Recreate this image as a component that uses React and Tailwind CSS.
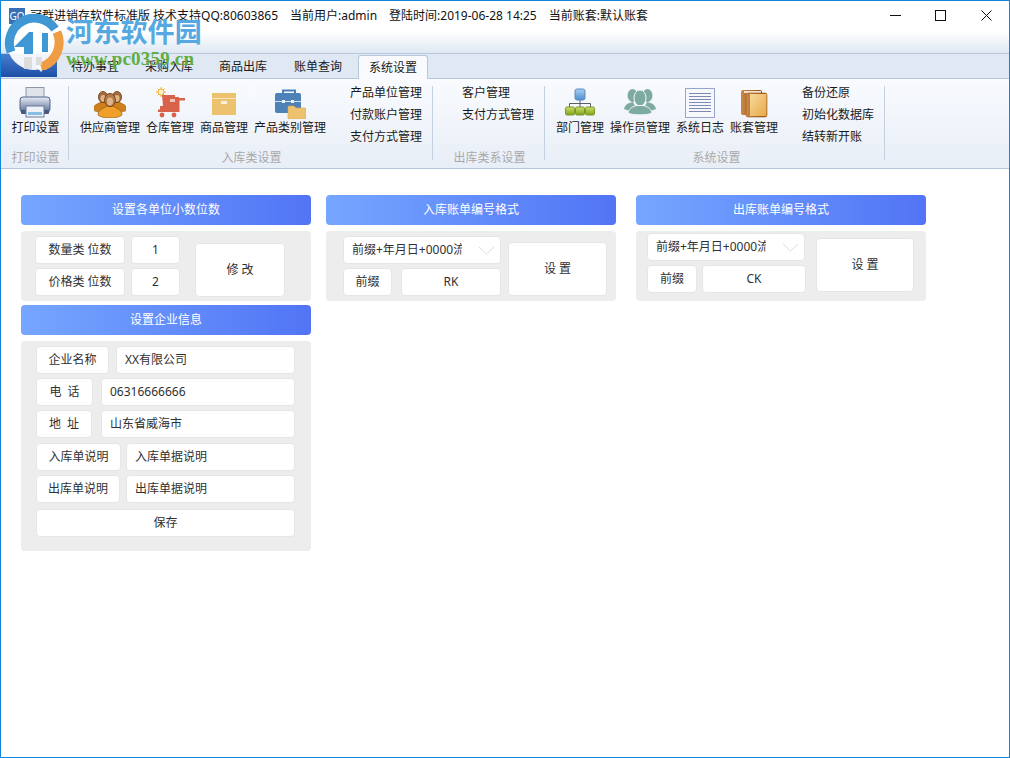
import React from "react";

function Box({ className = "", children }) {
  return (
    <div className={"flex items-center bg-white rounded-[4px] border border-[#e6e6e6] h-[28px] shrink-0 text-[12px] text-[#303133] " + className}>
      {children}
    </div>
  );
}
function Header({ children }) {
  return (
    <div className="h-[30px] flex items-center justify-center rounded-[4px] bg-gradient-to-r from-[#76a6ff] to-[#5274f5] text-white text-[12px]">
      {children}
    </div>
  );
}
function Panel({ className = "", children }) {
  return <div className={"bg-[#ededed] rounded-[4px] mt-[6px] " + className}>{children}</div>;
}

function Chevron() {
  return (
    <svg width="17" height="9" viewBox="0 0 17 9" className="shrink-0">
      <path d="M1 1 L8.5 8 L16 1" fill="none" stroke="#dcdcdc" strokeWidth="1" />
    </svg>
  );
}

function SelectBox({ w }) {
  return (
    <Box className={"pl-[8px] " + w}>
      <div className="w-[110px] overflow-hidden whitespace-nowrap">前缀+年月日+0000流水号</div>
      <div className="ml-[16px]"><Chevron /></div>
    </Box>
  );
}

function Printer() {
  return (
    <svg width="32" height="31" viewBox="0 0 32 31">
      <defs>
        <linearGradient id="pb" x1="0" y1="0" x2="0" y2="1"><stop offset="0" stopColor="#e8edf5" /><stop offset="1" stopColor="#5c6f96" /></linearGradient>
      </defs>
      <rect x="7" y="0.5" width="18" height="13" fill="#dfe3ea" stroke="#8d97a8" />
      <rect x="1" y="10" width="30" height="15" rx="3" fill="url(#pb)" stroke="#56678b" />
      <rect x="2" y="23" width="28" height="4" rx="1" fill="#46587d" />
      <rect x="7" y="19" width="18" height="11" fill="#eef2f7" stroke="#6a7b9b" />
      <rect x="9" y="25" width="14" height="3" fill="#86bce8" />
    </svg>
  );
}
function Person({ x, y, s = 1, fill, head }) {
  return (
    <g transform={`translate(${x} ${y}) scale(${s})`}>
      <path d="M-12 15 C-12 9 -5 8 -3 6 L3 6 C5 8 12 9 12 15 C8 19 -8 19 -12 15Z" fill={fill} stroke="#8a5212" strokeWidth="0.6" />
      <ellipse cx="0" cy="0" rx="5.4" ry="6.6" fill={head} stroke="#6d3f14" strokeWidth="0.9" />
      <ellipse cx="0" cy="1.5" rx="3" ry="4" fill="#e0b48a" />
    </g>
  );
}
function Supplier() {
  return (
    <svg width="32" height="28" viewBox="0 0 32 28">
      <Person x={9} y={7} s={0.85} fill="#cf7f1c" head="#a56a3c" />
      <Person x={23} y={7} s={0.85} fill="#cf7f1c" head="#a56a3c" />
      <Person x={16} y={10} s={1} fill="#f0a02a" head="#b67a48" />
    </svg>
  );
}
function Cart() {
  return (
    <svg width="30" height="32" viewBox="0 0 30 32">
      <g stroke="#f2b23a" strokeWidth="1">
        <path d="M6 1V11M1 6H11M2.5 2.5L9.5 9.5M9.5 2.5L2.5 9.5" />
      </g>
      <circle cx="6" cy="6" r="3" fill="#fff3c6" stroke="#f0b040" />
      <path d="M7 9H20V11H24V24H5V20H8Z" fill="#d9634a" />
      <rect x="15" y="13" width="5" height="3" fill="#f0c4b8" />
      <path d="M22 12H30V14.5H24.5V26H3V23.5H22Z" fill="#d9634a" />
      <circle cx="7" cy="29" r="2.4" fill="#d9634a" />
      <circle cx="19" cy="29" r="2.4" fill="#d9634a" />
    </svg>
  );
}
function BoxIcon() {
  return (
    <svg width="24" height="22" viewBox="0 0 24 22" className="mb-[3px]">
      <rect x="0" y="0" width="24" height="22" fill="#edc26f" />
      <rect x="0" y="5" width="24" height="1" fill="#f8e5bf" />
      <rect x="9" y="8" width="6" height="3" fill="#fbf1dc" />
    </svg>
  );
}
function Briefcase() {
  return (
    <svg width="32" height="31" viewBox="0 0 32 31" className="-mb-[1px]">
      <path d="M9 5V2.5H21V5" fill="none" stroke="#4a80b5" strokeWidth="2" />
      <rect x="1" y="5" width="26" height="20" rx="2" fill="#4d82b8" />
      <rect x="1" y="13" width="26" height="1" fill="#cfe0f0" />
      <rect x="8" y="12" width="3" height="3" fill="#e8f0f8" />
      <rect x="17" y="12" width="3" height="3" fill="#e8f0f8" />
      <path d="M14 30V19a1 1 0 0 1 1-1h5l2 2h9a1 1 0 0 1 1 1v9a1 1 0 0 1-1 1H15a1 1 0 0 1-1-1z" fill="#edc26f" stroke="#d9a850" strokeWidth="0.6" />
    </svg>
  );
}
function Org() {
  return (
    <svg width="30" height="28" viewBox="0 0 30 28" className="mb-[2px]">
      <defs>
        <linearGradient id="ob" x1="0" y1="0" x2="0" y2="1"><stop offset="0" stopColor="#a9d0f2" /><stop offset="1" stopColor="#4d8fd0" /></linearGradient>
        <linearGradient id="og" x1="0" y1="0" x2="0" y2="1"><stop offset="0" stopColor="#cde06a" /><stop offset="1" stopColor="#7ca31c" /></linearGradient>
      </defs>
      <rect x="10" y="1" width="10" height="11" rx="2" fill="url(#ob)" stroke="#5a8cbf" />
      <path d="M15 12V15M4.5 19V15.5H25.5V19M15 15V19" fill="none" stroke="#5b5f66" />
      <rect x="0.5" y="19" width="9" height="8" rx="1.5" fill="url(#og)" stroke="#7b9728" />
      <rect x="10.5" y="19" width="9" height="8" rx="1.5" fill="url(#og)" stroke="#7b9728" />
      <rect x="20.5" y="19" width="9" height="8" rx="1.5" fill="url(#og)" stroke="#7b9728" />
    </svg>
  );
}
function Team() {
  return (
    <svg width="32" height="28" viewBox="0 0 32 28" fill="#7eaba0" className="mb-[2px]">
      <ellipse cx="8.5" cy="7.5" rx="5" ry="6.5" />
      <ellipse cx="23.5" cy="7.5" rx="5" ry="6.5" />
      <path d="M0 21C1 16 5 15 9 14L12 20 8 24Z" />
      <path d="M32 21C31 16 27 15 23 14L20 20 24 24Z" />
      <ellipse cx="16" cy="10" rx="6" ry="8" stroke="#f3f6fb" strokeWidth="1" />
      <path d="M4 25C5 20 10 18 13 17.5H19C22 18 27 20 28 25 24 27.5 8 27.5 4 25Z" stroke="#f3f6fb" strokeWidth="1" />
    </svg>
  );
}
function DocLines() {
  return (
    <svg width="30" height="30" viewBox="0 0 30 30">
      <rect x="0.5" y="0.5" width="29" height="29" fill="#f7f8fc" stroke="#97a5c9" />
      <g stroke="#7a89b5">
        <path d="M4 5.5H26M4 8.5H26M4 11.5H26M4 14.5H26M4 17.5H26M4 20.5H26M4 23.5H26" />
      </g>
    </svg>
  );
}
function Books() {
  return (
    <svg width="28" height="29" viewBox="0 0 28 29">
      <defs>
        <linearGradient id="bk" x1="0" y1="0" x2="1" y2="1"><stop offset="0" stopColor="#f6d99a" /><stop offset="1" stopColor="#e8a94a" /></linearGradient>
        <linearGradient id="bs" x1="0" y1="0" x2="1" y2="0"><stop offset="0" stopColor="#c98747" /><stop offset="1" stopColor="#8f4e18" /></linearGradient>
      </defs>
      <rect x="1" y="1" width="21" height="25" rx="2" fill="url(#bs)" />
      <rect x="4" y="2" width="17" height="2" fill="#f4e3cb" />
      <rect x="6" y="4" width="21" height="24" rx="2" fill="url(#bs)" stroke="#a9601f" strokeWidth="0.6" />
      <rect x="10" y="5" width="16.5" height="22" fill="url(#bk)" />
    </svg>
  );
}

function Big({ icon, label }) {
  return (
    <div className="flex flex-col items-center shrink-0">
      <div className="h-[39px] flex items-end justify-center">{icon}</div>
      <div className="mt-[2px] leading-[16px] text-[12px] whitespace-nowrap text-[#1a1a1a]">{label}</div>
    </div>
  );
}
function Small({ items, className = "" }) {
  return (
    <div className={"flex flex-col gap-[6px] pt-[6px] text-[12px] leading-[16px] text-[#1a1a1a] whitespace-nowrap " + className}>
      {items.map((t) => <div key={t}>{t}</div>)}
    </div>
  );
}
function Group({ w, label, children, className = "", labelClass = "" }) {
  return (
    <>
      <div className={"flex flex-col shrink-0 " + w}>
        <div className={"flex gap-[6px] h-[64px] " + className}>{children}</div>
        <div className={"mt-[7px] text-center text-[12px] leading-[16px] text-[#a9a9a9] " + labelClass}>{label}</div>
      </div>
      <div className="w-px h-[74px] mt-[7px] bg-[#c3d0e0] shrink-0" />
    </>
  );
}

function Watermark() {
  return (
    <div className="absolute left-[3px] top-[13px] w-[210px] h-[60px] pointer-events-none">
      <svg width="60" height="56" viewBox="0 0 60 56" className="absolute left-0 top-0">
        <circle cx="30" cy="29" r="27" fill="#fff" opacity="0.93" />
        <path d="M7 38 A25 25 0 0 1 51 15" fill="none" stroke="#3f97d3" strokeWidth="9" />
        <path d="M53 18 A26 26 0 0 1 37 53" fill="none" stroke="#ee9d44" strokeWidth="9" />
        <path d="M10 33 L25 18 L29 18 L29 40 L20 40 L20 33Z" fill="#3f97d3" />
        <path d="M29 12 L41 12 L41 17 L37 17 L37 38 L31 38 Z" fill="#fff" />
        <path d="M38 19H44V38H38Z" fill="#3f97d3" />
        <path d="M20 43 H28 V55 H20Z M32 43 H38 V51 H32Z" fill="#d9d9d9" opacity="0.9" />
      </svg>
      <div className="absolute left-[62px] top-[0px] text-[27px] leading-[34px] font-bold tracking-[0.2px] text-[#57a8e0] whitespace-nowrap [font-family:'Noto_Sans_CJK_SC',sans-serif]">河东软件园</div>
      <div className="absolute left-[62px] top-[34px] text-[19px] leading-[22px] font-bold tracking-[0.2px] text-[#5fae42] whitespace-nowrap [font-family:'Liberation_Serif',serif]">www.pc0359.cn</div>
    </div>
  );
}

export default function App() {
  return (
    <div className="relative w-[1010px] h-[758px] overflow-hidden border border-[#1484d8] bg-white flex flex-col [font-family:'Noto_Sans','Noto_Sans_CJK_SC',sans-serif]">
      {/* title bar */}
      <div className="h-[53px] shrink-0 bg-[linear-gradient(#ffffff_0,#ffffff_58%,#dfe8f3_100%)] border-b border-[#b9c8dc]">
        <div className="flex items-center h-[29px] pl-[8px] text-[12px] text-[#111] whitespace-nowrap">
          <div className="w-[16px] h-[16px] mr-[5px] bg-[#3a6fb5] text-white text-[10px] leading-[16px] text-center shrink-0">GO</div>
          <span>冠群进销存软件标准版 技术支持QQ:80603865</span>
          <span className="ml-[12px]">当前用户:admin</span>
          <span className="ml-[12px]">登陆时间:2019-06-28 14:25</span>
          <span className="ml-[12px]">当前账套:默认账套</span>
          <div className="ml-auto flex items-center">
            <svg width="11" height="11" viewBox="0 0 11 11" className="mr-[34px]"><path d="M0 5.5H11" stroke="#111" /></svg>
            <svg width="11" height="11" viewBox="0 0 11 11" className="mr-[35px]"><rect x="0.5" y="0.5" width="10" height="10" fill="none" stroke="#111" /></svg>
            <svg width="11" height="11" viewBox="0 0 11 11" className="mr-[17px]"><path d="M0.5 0.5L10.5 10.5M10.5 0.5L0.5 10.5" stroke="#111" /></svg>
          </div>
        </div>
      </div>
      {/* tabs */}
      <div className="h-[25px] shrink-0 bg-[#dfe8f3] border-b border-[#b5c7de] flex items-end text-[12px] text-[#1a1a1a] whitespace-nowrap">
        <div className="w-[56px] h-[23px] mb-px bg-gradient-to-b from-[#4a7fd0] to-[#1c4ea6] flex items-end pl-[35px] shrink-0">
          <svg width="10" height="6" viewBox="0 0 10 6" className="mb-[5px]"><path d="M0 0H10L5 6Z" fill="#e8eef8" /></svg>
        </div>
        <div className="flex items-center h-[23px] ml-[14px] gap-[26px]">
          <span>待办事宜</span><span>采购入库</span><span>商品出库</span><span className="ml-px">账单查询</span>
        </div>
        <div className="ml-[16px] w-[70px] h-[24px] -mb-px bg-[#f8fafd] border border-b-0 border-[#b5c7de] rounded-t-[3px] flex items-center justify-center">系统设置</div>
      </div>
      {/* ribbon */}
      <div className="h-[90px] shrink-0 bg-[linear-gradient(#f9fbfe,#e8eef7)] border-b border-[#b3c5da] flex items-start">
        <Group w="w-[67px]" label="打印设置" className="justify-center pl-[2px]" labelClass="pl-[2px]"><Big icon={<Printer />} label="打印设置" /></Group>
        <Group w="w-[363px]" label="入库类设置" className="pl-[11px]" labelClass="pl-[2px]">
          <Big icon={<Supplier />} label="供应商管理" />
          <Big icon={<Cart />} label="仓库管理" />
          <Big icon={<BoxIcon />} label="商品管理" />
          <Big icon={<Briefcase />} label="产品类别管理" />
          <Small items={["产品单位管理", "付款账户管理", "支付方式管理"]} className="ml-[18px]" />
        </Group>
        <Group w="w-[111px]" label="出库类系设置" className="pl-[29px]" labelClass="pl-[2px]">
          <Small items={["客户管理", "支付方式管理"]} />
        </Group>
        <Group w="w-[339px]" label="系统设置" className="pl-[11px]" labelClass="pl-[4px]">
          <Big icon={<Org />} label="部门管理" />
          <Big icon={<Team />} label="操作员管理" />
          <Big icon={<DocLines />} label="系统日志" />
          <Big icon={<Books />} label="账套管理" />
          <Small items={["备份还原", "初始化数据库", "结转新开账"]} className="ml-[18px]" />
        </Group>
      </div>
      {/* content */}
      <div className="flex items-start pt-[26px] pl-[20px] gap-[15px]">
        <div className="w-[290px] shrink-0">
          <Header>设置各单位小数位数</Header>
          <Panel className="h-[70px] flex pl-[14px] pt-[5px]">
            <div className="flex flex-col gap-[4px]">
              <div className="flex gap-[6px]">
                <Box className="w-[90px] justify-center">数量类 位数</Box>
                <Box className="w-[49px] justify-center">1</Box>
              </div>
              <div className="flex gap-[6px]">
                <Box className="w-[90px] justify-center">价格类 位数</Box>
                <Box className="w-[49px] justify-center">2</Box>
              </div>
            </div>
            <Box className="!h-[54px] w-[90px] justify-center ml-[15px] mt-[7px]">修 改</Box>
          </Panel>
          <div className="mt-[4px]"><Header>设置企业信息</Header></div>
          <Panel className="h-[210px] pl-[15px] pt-[5px] w-[290px]">
            <div className="flex flex-col w-[259px]">
              <div className="flex gap-[7px]">
                <Box className="w-[73px] justify-center">企业名称</Box>
                <Box className="flex-1 pl-[8px]">XX有限公司</Box>
              </div>
              <div className="flex gap-[8px] mt-[4px]">
                <Box className="w-[57px] justify-center">电&nbsp;&nbsp;话</Box>
                <Box className="flex-1 pl-[8px]">06316666666</Box>
              </div>
              <div className="flex gap-[9px] mt-[4px]">
                <Box className="w-[56px] justify-center">地&nbsp;&nbsp;址</Box>
                <Box className="flex-1 pl-[8px]">山东省威海市</Box>
              </div>
              <div className="flex gap-[5px] mt-[5px]">
                <Box className="w-[85px] justify-center">入库单说明</Box>
                <Box className="flex-1 pl-[8px]">入库单据说明</Box>
              </div>
              <div className="flex gap-[6px] mt-[4px]">
                <Box className="w-[84px] justify-center">出库单说明</Box>
                <Box className="flex-1 pl-[8px]">出库单据说明</Box>
              </div>
              <Box className="justify-center mt-[6px]">保存</Box>
            </div>
          </Panel>
        </div>
        <div className="w-[290px] shrink-0">
          <Header>入库账单编号格式</Header>
          <Panel className="h-[70px] flex pl-[17px] pt-[5px]">
            <div className="flex flex-col gap-[4px] w-[158px]">
              <SelectBox w="w-[158px]" />
              <div className="flex gap-[9px]">
                <Box className="w-[49px] justify-center">前缀</Box>
                <Box className="w-[100px] justify-center">RK</Box>
              </div>
            </div>
            <Box className="!h-[54px] w-[99px] justify-center ml-[7px] mt-[6px]">设 置</Box>
          </Panel>
        </div>
        <div className="w-[290px] shrink-0 ml-[5px]">
          <Header>出库账单编号格式</Header>
          <Panel className="h-[70px] flex pl-[11px] pt-[2px]">
            <div className="flex flex-col gap-[4px] w-[159px]">
              <SelectBox w="w-[158px]" />
              <div className="flex gap-[5px]">
                <Box className="w-[50px] justify-center">前缀</Box>
                <Box className="w-[104px] justify-center">CK</Box>
              </div>
            </div>
            <Box className="!h-[54px] w-[98px] justify-center ml-[10px] mt-[5px]">设 置</Box>
          </Panel>
        </div>
      </div>
      <Watermark />
    </div>
  );
}
